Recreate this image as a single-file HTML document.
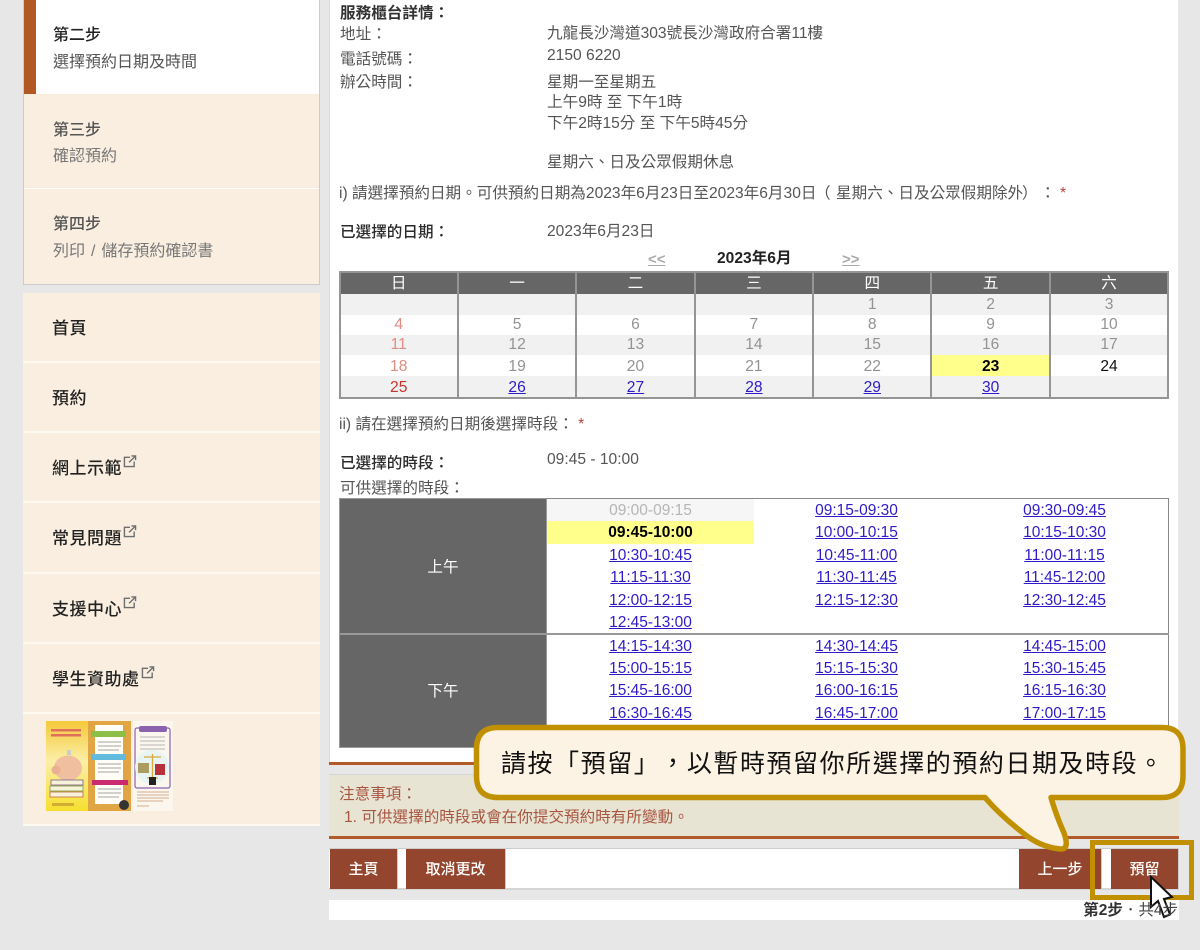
<!DOCTYPE html>
<html lang="zh-Hant"><head><meta charset="utf-8"><title>預約</title>
<style>
html,body{margin:0;padding:0}
body{position:relative;width:1200px;height:950px;overflow:hidden;background:#e7e7e7;font:15.6px/20px "Liberation Sans","Noto Sans CJK TC",sans-serif;color:#555;text-spacing-trim:space-all}
.a{position:absolute}
.t{position:absolute;white-space:nowrap;line-height:20px}
.b{color:#2b2b2b;font-weight:500}
a{color:#2f1bc8;text-decoration:underline}
.s1{font-size:16px;color:#222;font-weight:500;left:53px}
.s2{font-size:16px;color:#777;left:53px}
.m{left:52px;font-size:17px;letter-spacing:.5px;color:#222;font-weight:500}
.sep{position:absolute;left:23px;width:297px;height:2px;background:#fdf8f0}
table{position:absolute;border-collapse:collapse;table-layout:fixed;text-align:center}
td{padding:0;overflow:hidden;white-space:nowrap}
#cal{left:338.500px;top:270.500px;width:829px;border:2px solid #959595;color:#939393;font-size:15.6px;line-height:18px}
#cal td{border-left:2px solid #959595;border-right:2px solid #959595;padding-top:1px;box-sizing:border-box}
#cal tr.h td{background:#666;color:#fff;height:22px;padding-top:2px}
#cal tr.g td{background:#f1f1f1}
#cal tr.p td{padding-top:3px}
.r{color:#e08c82}
.ts{position:absolute;text-align:center;font-size:15.5px;line-height:22px;height:22px;width:207px;white-space:nowrap}
.btn{position:absolute;top:849px;height:40px;background:#94452d;color:#fff;font-weight:500;font-size:15px;line-height:42px;text-align:center;border-right:1px solid #ccc}
</style></head><body>

<!-- sidebar steps -->
<div class="a" style="left:23px;top:0;width:295px;height:284px;background:#f9eee0;border-left:1px solid #ccc;border-right:1px solid #ccc;border-bottom:1px solid #ccc"></div>
<div class="a" style="left:24px;top:0;width:295px;height:94px;background:#fff"></div>
<div class="a" style="left:24px;top:0;width:12px;height:94px;background:#b25822"></div>
<div class="a" style="left:24px;top:188px;width:295px;height:1px;background:#fff"></div>
<div class="t s1" style="top:26px">第二步</div>
<div class="t s2" style="top:53px;color:#555">選擇預約日期及時間</div>
<div class="t s1" style="top:121px;color:#555">第三步</div>
<div class="t s2" style="top:147px">確認預約</div>
<div class="t s1" style="top:215px;color:#555">第四步</div>
<div class="t s2" style="top:242px;word-spacing:1.500px">列印 / 儲存預約確認書</div>

<!-- sidebar menu -->
<div class="a" style="left:23px;top:293px;width:297px;height:532px;background:#f9eee0"></div>
<div class="sep" style="top:361px"></div>
<div class="sep" style="top:431px"></div>
<div class="sep" style="top:501px"></div>
<div class="sep" style="top:572px"></div>
<div class="sep" style="top:642px"></div>
<div class="sep" style="top:712px"></div>
<div class="sep" style="top:824px"></div>
<div class="t m" style="top:319px">首頁</div>
<div class="t m" style="top:389px">預約</div>
<div class="t m" style="top:459px">網上示範</div>
<div class="t m" style="top:529px">常見問題</div>
<div class="t m" style="top:600px">支援中心</div>
<div class="t m" style="top:670px">學生資助處</div>
<svg class="a" style="left:123px;top:455px" width="14" height="13" viewBox="0 0 14 14" fill="none" stroke="#6e6e6e" stroke-width="1.500"><path d="M7 2.500H1V12.500H11.500V7M6 8L12.500 1.500M8.500 1H13V5.500"/></svg>
<svg class="a" style="left:123px;top:525px" width="14" height="13" viewBox="0 0 14 14" fill="none" stroke="#6e6e6e" stroke-width="1.500"><path d="M7 2.500H1V12.500H11.500V7M6 8L12.500 1.500M8.500 1H13V5.500"/></svg>
<svg class="a" style="left:123px;top:596px" width="14" height="13" viewBox="0 0 14 14" fill="none" stroke="#6e6e6e" stroke-width="1.500"><path d="M7 2.500H1V12.500H11.500V7M6 8L12.500 1.500M8.500 1H13V5.500"/></svg>
<svg class="a" style="left:141px;top:666px" width="14" height="13" viewBox="0 0 14 14" fill="none" stroke="#6e6e6e" stroke-width="1.500"><path d="M7 2.500H1V12.500H11.500V7M6 8L12.500 1.500M8.500 1H13V5.500"/></svg>

<!-- leaflet illustration -->
<svg class="a" style="left:45px;top:721px" width="128" height="91" viewBox="0 0 128 91">
<defs><linearGradient id="y" x1="0" y1="0" x2="0" y2="1"><stop offset="0" stop-color="#f5c93a"/><stop offset=".45" stop-color="#fbefa8"/><stop offset="1" stop-color="#f6df2e"/></linearGradient></defs>
<rect x="1" y="0" width="42" height="90" fill="url(#y)"/>
<rect x="43" y="0" width="43" height="90" fill="#e2a544"/>
<rect x="88" y="0" width="40" height="90" fill="#fbf6ee"/>
<rect x="6" y="8" width="30" height="2.500" fill="#e0705a"/><rect x="6" y="13" width="30" height="2.500" fill="#e0705a"/>
<ellipse cx="23" cy="47" rx="14" ry="12.500" fill="#efbfa0"/><circle cx="11" cy="49" r="4.500" fill="#eab093"/><rect x="22" y="29" width="4" height="5" fill="#ccc"/>
<rect x="6" y="59" width="32" height="5" fill="#f7f3da" stroke="#7a5a90" stroke-width=".8"/>
<rect x="5" y="65" width="33" height="5" fill="#f7f3da" stroke="#7f9a40" stroke-width=".8"/>
<rect x="5" y="71" width="33" height="5" fill="#f7f3da" stroke="#c06a40" stroke-width=".8"/>
<rect x="7" y="82" width="22" height="3" fill="#b98a30" opacity=".6"/>
<rect x="50" y="4" width="28" height="79" fill="#fffdf5"/>
<rect x="46" y="10" width="35" height="6" fill="#8cbf45"/><rect x="46" y="33" width="35" height="6" fill="#62bbdc"/><rect x="47" y="59" width="36" height="5" fill="#c92a70"/>
<path d="M53 21H76M53 25H76M53 29H74M53 43H76M53 47H76M53 51H74M53 68H76M53 72H76M53 76H74" stroke="#b5b5b5" stroke-width="1.200"/>
<circle cx="79" cy="84" r="5" fill="#333"/>
<rect x="90" y="7" width="35" height="60" rx="2" fill="none" stroke="#8a62ae" stroke-width="1.200"/>
<rect x="94" y="5" width="28" height="6" rx="2" fill="#8a62ae"/>
<path d="M95 16H120M95 20H120M95 24H120M95 28H120" stroke="#b5b5b5"/>
<circle cx="107" cy="46" r="17" fill="#e7f4f3"/>
<rect x="93" y="42" width="11" height="10" fill="#ab9c60"/><rect x="110" y="43" width="10" height="11" fill="#b7313a"/>
<path d="M99 36H116M107.500 33V56M102 57H113" stroke="#d9a93a" stroke-width="1.300"/>
<rect x="104" y="56" width="7" height="8" fill="#222"/>
<path d="M92 71H124M92 74H124M92 77H124M92 80H118M92 85H104" stroke="#d2ae8e"/>
</svg>

<!-- main panel -->
<div class="a" style="left:329px;top:0;width:849px;height:762px;background:#fff;border-left:1px solid #ddd;box-sizing:border-box"></div>
<div class="a" style="left:329px;top:762px;width:850px;height:3px;background:#b25a2a"></div>
<div class="t b" style="left:340px;top:4px;font-weight:700;color:#333">服務櫃台詳情：</div>
<div class="t" style="left:340px;top:25px">地址：</div>
<div class="t" style="left:547px;top:24px">九龍長沙灣道303號長沙灣政府合署11樓</div>
<div class="t" style="left:340px;top:50px">電話號碼：</div>
<div class="t" style="left:547px;top:46px">2150 6220</div>
<div class="t" style="left:340px;top:73px">辦公時間：</div>
<div class="t" style="left:547px;top:73px">星期一至星期五</div>
<div class="t" style="left:547px;top:93px">上午9時 至 下午1時</div>
<div class="t" style="left:547px;top:114px">下午2時15分 至 下午5時45分</div>
<div class="t" style="left:547px;top:153px">星期六、日及公眾假期休息</div>
<div class="t" style="left:339px;top:184px">i) 請選擇預約日期。可供預約日期為2023年6月23日至2023年6月30日</div>
<div class="t" style="left:815px;top:184px">（</div>
<div class="t" style="left:836px;top:184px">星期六、日及公眾假期除外</div>
<div class="t" style="left:1022px;top:184px">）</div>
<div class="t" style="left:1040px;top:184px">：</div>
<div class="t" style="left:1060px;top:184px;color:#b5473a">*</div>
<div class="t b" style="left:340px;top:223px">已選擇的日期：</div>
<div class="t" style="left:547px;top:222px">2023年6月23日</div>
<div class="t" style="left:648px;top:250px;color:#aaa;font-weight:700;text-decoration:underline;font-size:15px">&lt;&lt;</div>
<div class="t" style="left:717px;top:249px;color:#222;font-weight:700">2023年6月</div>
<div class="t" style="left:842px;top:250px;color:#aaa;font-weight:700;text-decoration:underline;font-size:15px">&gt;&gt;</div>

<table id="cal"><colgroup><col style="width:118.400px"><col style="width:118.400px"><col style="width:118.400px"><col style="width:118.400px"><col style="width:118.400px"><col style="width:118.400px"><col style="width:118.400px"></colgroup>
<tr class="h"><td>日</td><td>一</td><td>二</td><td>三</td><td>四</td><td>五</td><td>六</td></tr>
<tr class="g" style="height:21px"><td></td><td></td><td></td><td></td><td>1</td><td>2</td><td>3</td></tr>
<tr style="height:20px"><td class="r">4</td><td>5</td><td>6</td><td>7</td><td>8</td><td>9</td><td>10</td></tr>
<tr class="g" style="height:20px"><td class="r">11</td><td>12</td><td>13</td><td>14</td><td>15</td><td>16</td><td>17</td></tr>
<tr class="p" style="height:21px"><td class="r">18</td><td>19</td><td>20</td><td>21</td><td>22</td><td style="background:#ffff8c;color:#000;font-weight:700">23</td><td style="color:#111">24</td></tr>
<tr class="g p" style="height:21px"><td style="color:#c9352b">25</td><td><a href="#">26</a></td><td><a href="#">27</a></td><td><a href="#">28</a></td><td><a href="#">29</a></td><td><a href="#">30</a></td><td></td></tr>
</table>

<div class="t" style="left:339px;top:415px">ii) 請在選擇預約日期後選擇時段： <span style="color:#b5473a">*</span></div>
<div class="t b" style="left:340px;top:454px">已選擇的時段：</div>
<div class="t" style="left:547px;top:450px">09:45 - 10:00</div>
<div class="t" style="left:340px;top:479px">可供選擇的時段：</div>

<!-- time table -->
<div class="a" style="left:339px;top:498px;width:830px;height:250px;border:1px solid #888;box-sizing:border-box;background:#fff"></div>
<div class="a" style="left:339px;top:498px;width:208px;height:250px;background:#666;border:1px solid #999;box-sizing:border-box"></div>
<div class="a" style="left:339px;top:633px;width:830px;height:2px;background:#999"></div>
<div class="t" style="left:339px;width:208px;text-align:center;top:558px;color:#fff">上午</div>
<div class="t" style="left:339px;width:208px;text-align:center;top:682px;color:#fff">下午</div>
<div class="a" style="left:547px;top:499px;width:207px;height:22px;background:#f6f6f6"></div>
<div class="a" style="left:547px;top:521px;width:207px;height:23px;background:#ffff8c"></div>
<div class="ts" style="left:547px;top:500px;color:#b5b5b5">09:00-09:15</div>
<div class="ts" style="left:753px;top:500px"><a href="#">09:15-09:30</a></div>
<div class="ts" style="left:961px;top:500px"><a href="#">09:30-09:45</a></div>
<div class="ts" style="left:547px;top:522px;color:#000;font-weight:700">09:45-10:00</div>
<div class="ts" style="left:753px;top:522px"><a href="#">10:00-10:15</a></div>
<div class="ts" style="left:961px;top:522px"><a href="#">10:15-10:30</a></div>
<div class="ts" style="left:547px;top:545px"><a href="#">10:30-10:45</a></div>
<div class="ts" style="left:753px;top:545px"><a href="#">10:45-11:00</a></div>
<div class="ts" style="left:961px;top:545px"><a href="#">11:00-11:15</a></div>
<div class="ts" style="left:547px;top:567px"><a href="#">11:15-11:30</a></div>
<div class="ts" style="left:753px;top:567px"><a href="#">11:30-11:45</a></div>
<div class="ts" style="left:961px;top:567px"><a href="#">11:45-12:00</a></div>
<div class="ts" style="left:547px;top:590px"><a href="#">12:00-12:15</a></div>
<div class="ts" style="left:753px;top:590px"><a href="#">12:15-12:30</a></div>
<div class="ts" style="left:961px;top:590px"><a href="#">12:30-12:45</a></div>
<div class="ts" style="left:547px;top:612px"><a href="#">12:45-13:00</a></div>
<div class="ts" style="left:547px;top:636px"><a href="#">14:15-14:30</a></div>
<div class="ts" style="left:753px;top:636px"><a href="#">14:30-14:45</a></div>
<div class="ts" style="left:961px;top:636px"><a href="#">14:45-15:00</a></div>
<div class="ts" style="left:547px;top:658px"><a href="#">15:00-15:15</a></div>
<div class="ts" style="left:753px;top:658px"><a href="#">15:15-15:30</a></div>
<div class="ts" style="left:961px;top:658px"><a href="#">15:30-15:45</a></div>
<div class="ts" style="left:547px;top:680px"><a href="#">15:45-16:00</a></div>
<div class="ts" style="left:753px;top:680px"><a href="#">16:00-16:15</a></div>
<div class="ts" style="left:961px;top:680px"><a href="#">16:15-16:30</a></div>
<div class="ts" style="left:547px;top:703px"><a href="#">16:30-16:45</a></div>
<div class="ts" style="left:753px;top:703px"><a href="#">16:45-17:00</a></div>
<div class="ts" style="left:961px;top:703px"><a href="#">17:00-17:15</a></div>

<!-- notes -->
<div class="a" style="left:329px;top:774px;width:850px;height:62px;background:#e8e4d4;border-top:1px solid #d5d5d5;box-sizing:border-box"></div>
<div class="a" style="left:329px;top:836px;width:850px;height:3px;background:#b25a2a"></div>
<div class="t" style="left:339px;top:785px;color:#a85540">注意事項：</div>
<div class="t" style="left:344px;top:808px;color:#a85540">1. 可供選擇的時段或會在你提交預約時有所變動。</div>

<!-- nav -->
<div class="a" style="left:329px;top:848px;width:850px;height:42px;background:#fff;border-top:1px solid #ccc;border-bottom:2px solid #d5d5d5;box-sizing:border-box"></div>
<div class="btn" style="left:330px;width:67px">主頁</div>
<div class="btn" style="left:406px;width:99px">取消更改</div>
<div class="btn" style="left:1019px;width:82px">上一步</div>
<div class="btn" style="left:1111px;width:67px">預留</div>
<div class="a" style="left:329px;top:900px;width:850px;height:20px;background:#fff"></div>

<!-- gold highlight -->
<div class="a" style="left:1090px;top:840px;width:104px;height:60px;border:5px solid #c09000;box-sizing:border-box"></div>

<!-- callout -->
<svg class="a" style="left:0;top:0" width="1200" height="950" viewBox="0 0 1200 950">
<path d="M498 727.500H1162Q1183 727.500 1183 749V776Q1183 797.500 1162 797.500H1051Q1056 815 1064 833Q1070 850 1060 849Q1040 847 1023 833Q1000 815 985 797.500H498Q476.500 797.500 476.500 776V749Q476.500 727.500 498 727.500Z" fill="#fdf3e5" stroke="#c09000" stroke-width="5.500" stroke-linejoin="round"/>
<path d="M1151 877V907L1158 901L1164 917L1170 914.500L1164 899L1172 897Z" fill="#fff" stroke="#111" stroke-width="2" stroke-linejoin="miter"/>
</svg>
<div class="t" style="left:501px;top:746px;font-size:25px;line-height:36px;letter-spacing:1.55px;color:#111">請按「預留」，以暫時預留你所選擇的預約日期及時段。</div>
<div class="t" style="right:22px;top:901px;font-size:15.500px;color:#444"><b style="font-weight:700;color:#333">第2步</b>．共4步</div>

</body></html>
